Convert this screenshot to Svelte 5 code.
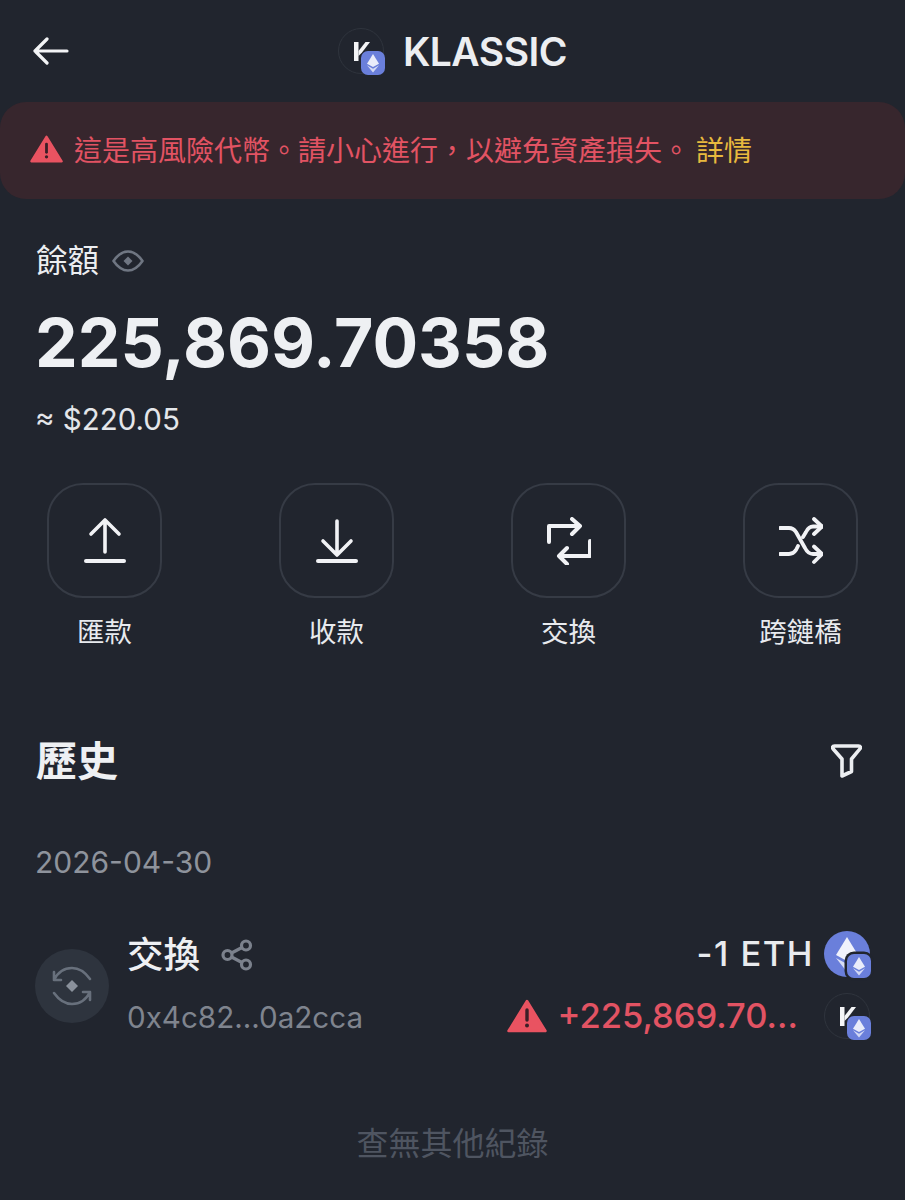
<script>
  const actions = [
    { label: '匯款', icon: 'up' },
    { label: '收款', icon: 'down' },
    { label: '交換', icon: 'swap' },
    { label: '跨鏈橋', icon: 'bridge' }
  ];
</script>

{#snippet eth(cls)}
  <span class={cls}>
    <svg viewBox="0 0 20 20">
      <path d="M10 2.500 5 10.600 10 13.400 15 10.600Z" fill="#fff" fill-opacity=".85" />
      <path d="M5 11.900 10 18 15 11.900 10 14.800Z" fill="#fff" fill-opacity=".7" />
    </svg>
  </span>
{/snippet}

{#snippet token(cls)}
  <span class="token {cls}">
    <svg class="k" viewBox="0 0 16 19">
      <path d="M0 0H4.500V19H0Z" fill="#f4f5f7" />
      <path d="M4.500 9 11.500 0H16L8 10.500 4.500 14Z" fill="#f4f5f7" />
    </svg>
    {@render eth('badge')}
  </span>
{/snippet}

{#snippet warn(cls)}
  <svg class={cls} viewBox="0 0 40 34">
    <path d="M20 2 38.500 32H1.500Z" fill="#e95361" stroke="#e95361" stroke-width="2.500" stroke-linejoin="round" />
    <path d="M20 11V21" stroke="#3a1f27" stroke-width="3.400" stroke-linecap="round" />
    <circle cx="20" cy="26.500" r="2" fill="#3a1f27" />
  </svg>
{/snippet}

<main>
  <header>
    <svg class="back" viewBox="0 0 36 28" fill="none" stroke="#f3f4f6" stroke-width="3.200" stroke-linecap="round" stroke-linejoin="round">
      <path d="M2 14H34M14 2 2 14 14 26" />
    </svg>
    <div class="title">
      {@render token('head-token')}
      <span class="name">KLASSIC</span>
    </div>
  </header>

  <div class="banner">
    {@render warn('banner-warn')}
    <span class="risk">這是高風險代幣。請小心進行，以避免資產損失。</span>
    <span class="more">詳情</span>
  </div>

  <section class="balance">
    <div class="label">
      <span>餘額</span>
      <svg viewBox="0 0 32 24" fill="none" stroke="#6f7682" stroke-width="2.600" stroke-linejoin="round">
        <path d="M1.500 12C6 5.500 10.500 2.500 16 2.500S26 5.500 30.500 12C26 18.500 21.500 21.500 16 21.500S6 18.500 1.500 12Z" />
        <path d="M16 7.500 20.500 12 16 16.500 11.500 12Z" fill="#6f7682" stroke="none" />
      </svg>
    </div>
    <div class="amount">225,869.70358</div>
    <div class="fiat">≈ $220.05</div>
  </section>

  <nav class="actions">
    {#each actions as a}
      <div class="action">
        <div class="btn">
          <svg viewBox="0 0 44 48" fill="none" stroke="#f1f2f5" stroke-width="4" stroke-linecap="round" stroke-linejoin="round">
            {#if a.icon === 'up'}
              <path d="M22 4V35M8 17 22 3 36 17" stroke-width="3.600" />
              <path d="M3 44H41" stroke-width="4" />
            {:else if a.icon === 'down'}
              <path d="M22 4V37M8 24 22 38 36 24" stroke-width="3.600" />
              <path d="M3 44H41" stroke-width="4" />
            {:else if a.icon === 'swap'}
              <path d="M2 25V9H33M25 2 33 9 25 17" />
              <path d="M43 24V39H12M20 31 12 39 20 47" />
            {:else}
              <path d="M1 11H10C13 11 15 12 17 15L26 31C28 35 30 37 34 37H43M35 2 43 9.500 35 17M35 29.500 43 37 35 45" stroke-width="3.800" />
              <path d="M1 37H10C13 37 15 36 17 33L19 29M24 20 27 15C29 11 31 9.500 34 9.500H43" stroke-width="3.800" />
            {/if}
          </svg>
        </div>
        <span class="caption">{a.label}</span>
      </div>
    {/each}
  </nav>

  <section class="history">
    <div class="history-head">
      <h2>歷史</h2>
      <svg viewBox="0 0 31 34" fill="none" stroke="#eceef1" stroke-width="3.600" stroke-linejoin="round" stroke-linecap="round">
        <path d="M3.500 2H27.500C29.500 2 30 3.500 28.800 5L20.500 15V27.500L11 32V15L2.200 5C1 3.500 1.500 2 3.500 2Z" />
      </svg>
    </div>
    <div class="date">2026-04-30</div>

    <div class="tx">
      <div class="tx-icon">
        <svg viewBox="0 0 40 40" fill="none" stroke="#68707c" stroke-width="2.600" stroke-linecap="round" stroke-linejoin="round">
          <path d="M2 6V14H9M2 14C6 6 13 2 20 2S33 6 38 13" />
          <path d="M38 34V26H31M38 26C34 34 27 38 20 38S7 34 2 27" />
          <path d="M20 14 26 20 20 26 14 20Z" fill="#8a919c" stroke="none" />
        </svg>
      </div>
      <div class="tx-left">
        <div class="tx-name">
          <span>交換</span>
          <svg viewBox="0 0 32 32" fill="none" stroke="#7b818c" stroke-width="3.200">
            <circle cx="6.500" cy="16" r="4.500" />
            <circle cx="25" cy="6.500" r="4.500" />
            <circle cx="25" cy="25.500" r="4.500" />
            <path d="M10.500 14 21 8.500M10.500 18 21 23.500" />
          </svg>
        </div>
        <div class="addr">0x4c82...0a2cca</div>
      </div>
      <div class="tx-right">
        <div class="line">
          <span class="out">-1 ETH</span>
          <span class="eth-coin">
            <svg viewBox="0 0 46 46">
              <circle cx="23" cy="23" r="23" fill="#6a7fdb" />
              <path d="M23 6 12 24 23 30 34 24Z" fill="#fff" fill-opacity=".9" />
              <path d="M12 27 23 41 34 27 23 33Z" fill="#fff" fill-opacity=".75" />
            </svg>
            {@render eth('badge coin-badge')}
          </span>
        </div>
        <div class="line">
          {@render warn('row-warn')}
          <span class="in">+225,869.70...</span>
          {@render token('row-token')}
        </div>
      </div>
    </div>
  </section>

  <footer>查無其他紀錄</footer>
</main>

<style>
  :global(body) {
    margin: 0;
    background: #21252e;
  }
  main {
    height: 1200px;
    overflow: hidden;
    background: #21252e;
    color: #f0f1f4;
    font-family: Inter, "Noto Sans CJK TC", sans-serif;
  }
  header {
    height: 102px;
    position: relative;
    display: flex;
    align-items: center;
    justify-content: center;
  }
  .back {
    position: absolute;
    left: 33px;
    top: 37px;
    width: 36px;
    height: 28px;
  }
  .title {
    display: flex;
    align-items: center;
    gap: 19px;
  }
  .name {
    font-size: 39px;
    font-weight: 600;
    letter-spacing: -0.5px;
    color: #eceef1;
  }
  .token {
    position: relative;
    display: block;
    width: 46px;
    height: 46px;
    border: 1px solid #2f343d;
    border-radius: 50%;
    box-sizing: border-box;
  }
  .k {
    position: absolute;
    left: 15px;
    top: 13px;
    width: 16px;
    height: 19px;
  }
  .badge {
    position: absolute;
    right: -2px;
    bottom: -2px;
    width: 24px;
    height: 24px;
    background: #6a7fdb;
    border-radius: 7px;
    display: block;
  }
  .badge svg {
    display: block;
    width: 100%;
    height: 100%;
  }
  .banner {
    height: 97px;
    box-sizing: border-box;
    background: #37262d;
    border-radius: 26px;
    display: flex;
    align-items: center;
    padding: 0 0 4px 30px;
    font-size: 28px;
  }
  .banner-warn {
    width: 33px;
    height: 28px;
    margin-right: 11px;
    flex: none;
  }
  .risk {
    color: #e25363;
  }
  .more {
    color: #e8b93e;
    margin-left: 6px;
  }
  .balance {
    padding: 40px 36px 0 35px;
  }
  .label {
    display: flex;
    align-items: center;
    gap: 13px;
    margin-left: 1px;
    font-size: 31.500px;
    line-height: 44px;
    color: #eceef1;
  }
  .label svg {
    width: 32px;
    height: 24px;
  }
  .amount {
    font-size: 67.800px;
    font-weight: 700;
    line-height: 82px;
    margin-top: 18px;
    color: #eef0f3;
  }
  .fiat {
    font-size: 29.500px;
    line-height: 40px;
    margin-top: 16px;
    color: #e4e6ea;
  }
  .actions {
    display: flex;
    justify-content: space-between;
    padding: 44px 47px 0;
  }
  .action {
    width: 115px;
    display: flex;
    flex-direction: column;
    align-items: center;
  }
  .btn {
    width: 115px;
    height: 115px;
    box-sizing: border-box;
    border: 2px solid #363b45;
    border-radius: 36px;
    display: flex;
    align-items: center;
    justify-content: center;
  }
  .btn svg {
    width: 44px;
    height: 48px;
  }
  .caption {
    font-size: 27.500px;
    line-height: 40px;
    margin-top: 14px;
    white-space: nowrap;
    color: #e8eaee;
  }
  .history {
    padding: 0 36px 0 35px;
  }
  .history-head {
    display: flex;
    align-items: center;
    justify-content: space-between;
    padding-top: 81px;
    padding-right: 7px;
  }
  h2 {
    margin: 0 0 0 1px;
    font-size: 41px;
    line-height: 56px;
    font-weight: 700;
    color: #eef0f3;
  }
  .history-head svg {
    width: 31px;
    height: 34px;
  }
  .date {
    font-size: 30px;
    line-height: 40px;
    margin-top: 53px;
    color: #8e939c;
  }
  .tx {
    display: flex;
    align-items: center;
    margin-top: 43px;
    height: 122px;
  }
  .tx-icon {
    width: 74px;
    height: 74px;
    border-radius: 50%;
    background: #2e343e;
    display: flex;
    align-items: center;
    justify-content: center;
    flex: none;
  }
  .tx-icon svg {
    width: 40px;
    height: 40px;
  }
  .tx-left {
    margin-left: 18px;
    padding-bottom: 6px;
  }
  .tx-name {
    display: flex;
    align-items: center;
    gap: 21px;
    font-size: 36.500px;
    font-weight: 500;
    line-height: 52px;
    color: #eef0f3;
  }
  .tx-name svg {
    width: 32px;
    height: 32px;
  }
  .addr {
    font-size: 29.600px;
    line-height: 40px;
    margin-top: 16px;
    color: #7f848e;
  }
  .tx-right {
    margin-left: auto;
    display: flex;
    flex-direction: column;
    align-items: flex-end;
    gap: 16px;
    margin-right: -1px;
    padding-bottom: 3px;
  }
  .line {
    display: flex;
    align-items: center;
    height: 46px;
  }
  .out {
    font-size: 34.500px;
    font-weight: 500;
    letter-spacing: 1.500px;
    color: #e9ebee;
    margin-right: 10px;
  }
  .in {
    font-size: 34.500px;
    font-weight: 500;
    color: #e25363;
    margin-right: 26px;
  }
  .eth-coin {
    position: relative;
    display: block;
    width: 46px;
    height: 46px;
  }
  .eth-coin svg {
    display: block;
  }
  .eth-coin .badge {
    right: -1px;
    bottom: -1px;
  }
  .coin-badge {
    box-shadow: 0 0 0 2.500px #21252e;
  }
  .row-warn {
    width: 40px;
    height: 34px;
    margin-right: 10px;
  }
  footer {
    text-align: center;
    font-size: 32px;
    line-height: 44px;
    margin-top: 75px;
    color: #4f5561;
  }
</style>
